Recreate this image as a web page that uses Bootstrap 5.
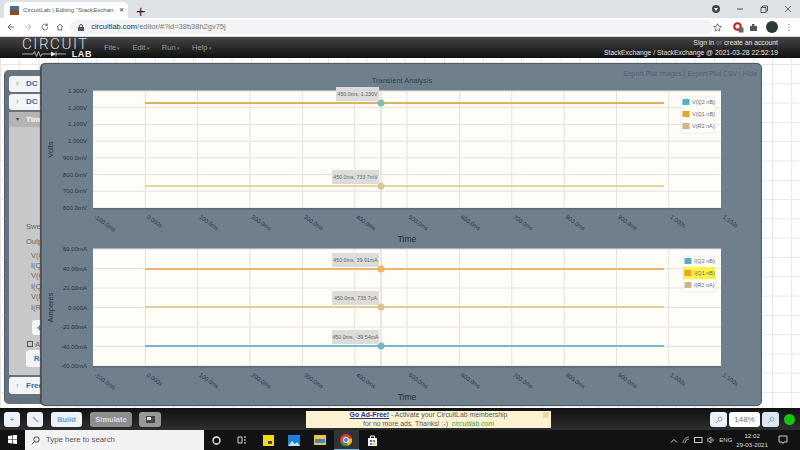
<!DOCTYPE html>
<html lang="en">
<head>
<meta charset="UTF-8">
<title>CircuitLab | Editing "StackExchange"</title>
<link rel="stylesheet" href="https://cdn.jsdelivr.net/npm/bootstrap@5.3.3/dist/css/bootstrap.min.css">
<script src="https://cdn.jsdelivr.net/npm/bootstrap@5.3.3/dist/js/bootstrap.bundle.min.js"></script>
<style>
html, body { width: 800px; height: 450px; margin: 0; overflow: hidden; }
body { font-family: "Liberation Sans", Arial, sans-serif; font-size: 8px; display: flex; flex-direction: column; background: #fff; }
.tabstrip { height: 18px; background: #dee1e6; padding-left: 4px; flex: none; }
.chrome-tab { width: 124px; height: 16px; margin-top: 2px; background: #fff; border-radius: 5px 5px 0 0; color: #555; font-size: 6.1px; padding: 0 4px 0 6px; }
.favicon { width: 9px; height: 9px; background: linear-gradient(#3a6ea5 50%, #8a4a22 50%); flex: none; }
.addrbar { height: 19px; background: #fff; border-bottom: 1px solid #d8d8d8; padding: 0 8px 0 7px; flex: none; color: #666; }
.omnibox { width: 660px; height: 14px; background: #f1f3f4; border-radius: 7px; font-size: 7.5px; color: #777; padding-left: 8px; margin-left: 6px; }
.omnibox b { font-weight: 400; color: #333; }
.lock-gap { margin-right: 3px; }
.appbar { height: 21px; background: linear-gradient(#454545, #101010); color: #e4e4e4; flex: none; padding: 0 22px 0 22px; }
.logo { width: 70px; height: 21px; position: relative; color: #ddd; }
.logo-top { position: absolute; left: 0; top: 1px; font-family: Roboto, "Liberation Sans", sans-serif; font-size: 15px; line-height: 12px; letter-spacing: 1.6px; font-weight: 300; white-space: nowrap; }
.logo-lab { position: absolute; right: 0; top: 13px; font-size: 9px; line-height: 8px; font-weight: 700; letter-spacing: .6px; color: #eee; }
.appmenu { margin-left: 12px; gap: 12px; color: #9a9a9a; font-size: 7.5px; }
.appmenu span::after { content: " \25BE"; font-size: 5px; color: #777; }
.appmeta { text-align: right; font-size: 6.8px; line-height: 9.5px; margin-left: auto; }
.appmeta i { font-style: normal; color: #888; }
.canvas { flex: 1; position: relative; overflow: hidden; background-color: #fff; background-image: linear-gradient(#e7e7e7 1px, transparent 1px), linear-gradient(90deg, #e7e7e7 1px, transparent 1px); background-size: 19.3px 19.3px; background-position: 0 6px; }
.sidepanel { position: absolute; left: 4px; top: 12px; width: 60px; height: 334px; background: #66737f; border-left: 1px solid #4f5c70; border-radius: 5px; padding: 6px 0 0 4px; }
.sidebody { color: #666; font-size: 7.5px; }
.acc-row { height: 16px; background: #f2f4f6; border-radius: 3px; color: #2b6ca8; font-weight: 700; font-size: 8px; padding-left: 17px; line-height: 16px; margin-bottom: 2px; position: relative; }
.acc-row::before { content: "\203A"; position: absolute; left: 7px; color: #88a; font-weight: 400; }
.acc-open { height: 15px; line-height: 15px; color: #fff; background: #b4b4b4; margin: 0; border-radius: 0; }
.acc-open::before { content: "\25BE"; color: #444; font-size: 6px; }
.timesection { background: #c8c8c8; height: 263px; }
.sweep-lines { padding: 92px 0 0 17px; line-height: 15px; }
.trace-lines { padding: 1.500px 0 0 22px; line-height: 10.400px; }
.side-add { margin: 7px 0 0 23px; height: 15px; background: #f6f6f6; border-radius: 3px; color: #5b8fc4; padding-left: 5px; line-height: 15px; }
.side-note { padding-left: 18px; margin-top: 5px; line-height: 10px; }
.side-note span { display: inline-block; width: 6px; height: 6px; border: 1px solid #555; margin-right: 2px; }
.side-run { margin-left: 17px; height: 17px; background: #f2f4f6; border-radius: 3px; color: #2b6ca8; font-weight: 700; padding-left: 8px; line-height: 17px; }
.freq-row { margin-top: 2px; height: 17px; line-height: 17px; }
.plotwin { position: absolute; left: 41px; top: 5px; width: 721px; height: 343px; background: #6f7f8c; border: 1px solid #4f5a66; border-radius: 5px; box-shadow: -1px 0 1px #444; }
.plotlinks { position: absolute; right: 4px; top: 5px; font-size: 6.9px; color: #56626e; }
.plotwin svg { position: absolute; left: 0; top: 0; }
.toolbar { height: 22px; background: linear-gradient(#111, #2e2e2e); flex: none; padding: 4px 0 0 4px; position: relative; }
.toolbtn { height: 15px; background: #eef2f6; border-radius: 3px; font-size: 7.5px; color: #6fa0d0; font-weight: 700; padding: 0; display: flex; align-items: center; justify-content: center; flex: none; }
.toolgrey { background: #8e8e8e; color: #ddd; }
.adbox { position: absolute; left: 306px; top: 3px; width: 245px; height: 17px; background: #fdf3d3; font-size: 6.9px; line-height: 8.500px; color: #555; text-align: center; }
.adbox a { color: #223399; font-weight: 700; }
.adbox em { color: #3fa03f; }
.adclose { position: absolute; right: 2px; top: 1px; width: 6px; height: 6px; background: #e6d9a8; }
.zoomgrp { position: absolute; right: 5px; top: 4px; gap: 2px; }
.zoomdot { width: 11px; height: 11px; border-radius: 50%; background: #16c60c; margin-left: 3px; }
.taskbar { height: 20px; background: #111214; flex: none; color: #ddd; position: relative; }
.searchbox { width: 179px; height: 20px; background: #f2f2f2; margin-left: 25px; color: #555; font-size: 7.8px; padding-left: 6px; gap: 6px; }
.taskicons { gap: 9px; margin-left: 3.500px; }
.taskicon { width: 17px; height: 20px; display: flex; align-items: center; justify-content: center; }
.taskactive { background: #333; border-bottom: 1px solid #76b9ed; }
.traybox { position: absolute; right: 12px; top: 0; height: 20px; gap: 4px; font-size: 6px; }
.clock { text-align: center; line-height: 9px; font-size: 6.2px; margin-right: 6px; }
</style>
</head>
<body>

<div class="tabstrip d-flex align-items-start">
  <div class="chrome-tab d-flex align-items-center gap-1">
    <span class="favicon"></span>
    <span class="flex-grow-1 text-nowrap">CircuitLab | Editing "StackExchan</span>
    <span class="text-dark">&#10005;</span>
  </div>
  <span class="ms-2 mt-1 text-dark fs-6 lh-1">+</span>
  <div class="ms-auto d-flex align-items-center gap-3 pe-2" style="height:18px">
    <svg width="8" height="8" viewBox="0 0 8 8"><circle cx="4" cy="4" r="4" fill="#444"/><path d="M2 3h4L4 6z" fill="#fff"/></svg>
    <svg width="8" height="8" viewBox="0 0 8 8"><path d="M1 4h6" stroke="#555"/></svg>
    <svg width="8" height="8" viewBox="0 0 8 8"><path d="M1 2.500h5v5H1zM2.500 2.500V1H7.500V6H6" fill="none" stroke="#555"/></svg>
    <svg width="8" height="8" viewBox="0 0 8 8"><path d="M1 1l6 6M7 1L1 7" stroke="#666"/></svg>
  </div>
</div>

<div class="addrbar d-flex align-items-center" style="padding-left:7px">
  <svg width="8" height="8" viewBox="0 0 8 8" style="margin-right:9px"><path d="M7 4H1M4 1L1 4l3 3" fill="none" stroke="#666"/></svg>
  <svg width="8" height="8" viewBox="0 0 8 8" style="margin-right:9px"><path d="M1 4h6M4 1l3 3-3 3" fill="none" stroke="#bbb"/></svg>
  <svg width="8" height="8" viewBox="0 0 8 8" style="margin-right:8px"><path d="M7 4A3 3 0 1 1 6 1.800M6.500 .5v2h-2" fill="none" stroke="#666"/></svg>
  <svg width="8" height="8" viewBox="0 0 8 8"><path d="M1 4l3-3 3 3M2 3.500V7h4V3.500" fill="none" stroke="#666"/></svg>
  <div class="omnibox d-flex align-items-center gap-1">
    <svg class="lock-gap" width="6" height="7" viewBox="0 0 6 7"><rect y="3" width="6" height="4" fill="#555"/><path d="M1.500 3V2a1.500 1.500 0 0 1 3 0v1" fill="none" stroke="#555"/></svg>
    <span><b>circuitlab.com</b>/editor/#?id=38b38h2gv75j</span>
  </div>
  <div class="ms-auto d-flex align-items-center gap-2">
    <svg width="9" height="9" viewBox="0 0 10 10" style="margin-right:3px"><path d="M5 .8l1.300 2.800 3 .3-2.300 2 .7 3L5 7.400 2.300 8.900l.7-3-2.300-2 3-.3z" fill="none" stroke="#666"/></svg>
    <svg width="11" height="11" viewBox="0 0 11 11" style="margin-right:-3px"><circle cx="4.500" cy="4.500" r="3.300" fill="none" stroke="#cc1111" stroke-width="2"/><rect x="5.500" y="5.500" width="5" height="5" fill="#666"/></svg>
    <svg width="9" height="9" viewBox="0 0 9 9"><path d="M1 3h2V1h2.500v2H8v5H1z" fill="#555"/></svg>
    <svg width="12" height="12" viewBox="0 0 12 12"><circle cx="6" cy="6" r="6" fill="#2f3a3a"/></svg>
    <svg width="6" height="9" viewBox="0 0 6 9"><path d="M3 1v.8M3 4v.8M3 7v.8" stroke="#555" stroke-width="1.200"/></svg>
  </div>
</div>

<div class="appbar d-flex align-items-center">
  <div class="logo">
    <span class="logo-top">CIRCUIT</span>
    <svg width="46" height="6" viewBox="0 0 46 6" style="position:absolute;left:0;top:13.500px"><path d="M0 3h11l1.500-2.500 2 5 2-5 2 5 1.500-2.500H29M34 .5v5M34 3h10" fill="none" stroke="#eee" stroke-width=".7"/><path d="M29 .5v5l5-2.500z" fill="#eee"/></svg>
    <span class="logo-lab">LAB</span>
  </div>
  <div class="appmenu d-flex">
    <span>File</span><span>Edit</span><span>Run</span><span>Help</span>
  </div>
  <div class="appmeta">
    <div>Sign in <i>or</i> create an account</div>
    <div>StackExchange / StackExchange @ 2021-03-28 22:52:19</div>
  </div>
</div>

<div class="canvas">
  <div class="sidepanel">
    <div class="sidebody">
      <div class="acc-row">DC</div>
      <div class="acc-row">DC S</div>
      <div class="timesection">
        <div class="acc-row acc-open">Tim</div>
        <div class="sweep-lines">Swee<br>Outp</div>
        <div class="trace-lines">V(Q<br>I(Q<br>V(Q<br>I(Q<br>V(R<br>I(R</div>
        <div class="side-add">&#9670;</div>
        <div class="side-note"><span></span>A</div>
        <div class="side-run">Re</div>
      </div>
      <div class="acc-row freq-row">Freq</div>
    </div>
  </div>
  <div class="plotwin">
    <svg id="plots" width="721" height="343" xmlns="http://www.w3.org/2000/svg"></svg>
    <div class="plotlinks">Export Plot Images | Export Plot CSV | Hide</div>
  </div>
</div>

<div class="toolbar d-flex gap-1">
  <div class="toolbtn" style="width:16px;margin-right:3px">+</div>
  <div class="toolbtn" style="width:16px;margin-right:4px"><svg width="7" height="7" viewBox="0 0 7 7"><path d="M1 1l5 5" stroke="#8ab" stroke-width="1.400"/></svg></div>
  <div class="toolbtn" style="width:31px;margin-right:4px">Build</div>
  <div class="toolbtn toolgrey" style="width:42px;margin-right:3px">Simulate</div>
  <div class="toolbtn toolgrey" style="width:22px;background:#999">
    <svg width="9" height="7" viewBox="0 0 9 7"><rect width="9" height="7" fill="#444"/><rect x="1" y="1" width="4" height="3" fill="#ddd"/></svg>
  </div>
  <div class="adbox">
    <span class="adclose"></span>
    <a href="#">Go Ad-Free!</a> - Activate your CircuitLab membership<br>
    for no more ads. Thanks! :-) &nbsp;<em>circuitlab.com</em>
  </div>
  <div class="zoomgrp d-flex align-items-center">
    <div class="toolbtn" style="width:17px"><svg width="8" height="8" viewBox="0 0 8 8"><circle cx="5" cy="3" r="2" fill="none" stroke="#8ab"/><path d="M3.500 4.500L1 7" stroke="#8ab"/></svg></div>
    <div class="toolbtn" style="width:31px;background:#fff;color:#777;font-weight:400;font-size:8px">148%</div>
    <div class="toolbtn" style="width:17px;background:#dfe8f2"><svg width="8" height="8" viewBox="0 0 8 8"><circle cx="5" cy="3" r="2" fill="none" stroke="#8ab"/><path d="M3.500 4.500L1 7" stroke="#8ab"/></svg></div>
    <div class="zoomdot"></div>
  </div>
</div>

<div class="taskbar d-flex align-items-center">
  <svg width="9" height="9" viewBox="0 0 9 9" style="position:absolute;left:8px;top:5px"><path d="M0 1l4-.6V4H0zM4.600 .3L9 0v4H4.600zM0 4.600h4v3.900L0 8zM4.600 4.600H9V9l-4.400-.6z" fill="#fff"/></svg>
  <div class="searchbox d-flex align-items-center">
    <svg width="9" height="9" viewBox="0 0 9 9"><circle cx="5.500" cy="3.500" r="2.700" fill="none" stroke="#444"/><path d="M3.500 5.500L.8 8.300" stroke="#444"/></svg>
    <span>Type here to search</span>
  </div>
  <div class="taskicons d-flex align-items-center">
    <div class="taskicon"><svg width="9" height="9" viewBox="0 0 9 9"><circle cx="4.500" cy="4.500" r="3.500" fill="none" stroke="#fff" stroke-width="1.300"/></svg></div>
    <div class="taskicon"><svg width="10" height="8" viewBox="0 0 10 8"><path d="M1 1h4v6H1zM7 1h2M7 4h2M7 7h2" fill="none" stroke="#ddd"/></svg></div>
    <div class="taskicon"><svg width="11" height="11" viewBox="0 0 11 11"><rect width="11" height="11" fill="#f5d90a"/><rect x="5" y="6" width="4" height="3" fill="#444"/></svg></div>
    <div class="taskicon"><svg width="12" height="11" viewBox="0 0 12 11"><rect width="12" height="11" fill="#1f7fd6"/><path d="M0 11l4-5 3 3 2-2 3 4z" fill="#bfe3fb"/></svg></div>
    <div class="taskicon"><svg width="12" height="10" viewBox="0 0 12 10"><rect width="12" height="10" fill="#f0c24b"/><rect x="1" y="4" width="10" height="4" fill="#3f88c5"/></svg></div>
    <div class="taskicon taskactive" style="width:25px;margin:0 -4px"><svg width="12" height="12" viewBox="0 0 12 12"><circle cx="6" cy="6" r="6" fill="#d8442f"/><path d="M6 6L.8 9A6 6 0 0 0 8 11.700z" fill="#2f9e48"/><path d="M6 6l2 5.700A6 6 0 0 0 11.800 4.500z" fill="#f4c20d"/><circle cx="6" cy="6" r="2.600" fill="#4286f5" stroke="#fff"/></svg></div>
    <div class="taskicon"><svg width="11" height="11" viewBox="0 0 11 11"><path d="M1 3h9v8H1z" fill="#fff"/><path d="M3.500 3V1h4v2" fill="none" stroke="#fff"/><rect x="3" y="5" width="2" height="2" fill="#e25"/><rect x="6" y="5" width="2" height="2" fill="#3a3"/><rect x="3" y="8" width="2" height="2" fill="#39e"/><rect x="6" y="8" width="2" height="2" fill="#ec2"/></svg></div>
  </div>
  <div class="traybox d-flex align-items-center">
    <svg width="8" height="5" viewBox="0 0 8 5"><path d="M1 4.500l3-3 3 3" fill="none" stroke="#ccc"/></svg>
    <svg width="8" height="8" viewBox="0 0 8 8"><path d="M1 7A6 6 0 0 1 7 1M3 7a4 4 0 0 1 4-4" fill="none" stroke="#999"/></svg>
    <svg width="9" height="6" viewBox="0 0 9 6"><rect x=".5" y=".5" width="7.500" height="5" fill="none" stroke="#ccc"/></svg>
    <svg width="8" height="8" viewBox="0 0 8 8"><path d="M0 3h2l2-2v6L2 5H0zM5.500 2.500a2 2 0 0 1 0 3" fill="none" stroke="#bbb"/></svg>
    <span>ENG</span>
    <div class="clock">12:02<br>29-03-2021</div>
    <svg width="10" height="10" viewBox="0 0 10 10"><path d="M1 1h8v6H6L5 8.500 4 7H1z" fill="none" stroke="#ccc"/></svg>
  </div>
</div>

<script>
// both transient plots, coordinates are screen pixels minus the window offset
const svg = document.getElementById('plots');
const offX = 42, offY = 64;
const xLabels = ['-100.0ms','0.000s','100.0ms','200.0ms','300.0ms','400.0ms','500.0ms','600.0ms','700.0ms','800.0ms','900.0ms','1.000s','1.100s'];
let out = '';

const text = (x, y, s, size, fill, extra) =>
  `<text x="${x}" y="${y}" font-size="${size}" fill="${fill}" font-family="Liberation Sans, Arial, sans-serif" ${extra || ''}>${s}</text>`;

function plot(cfg) {
  const x0 = 93 - offX, x1 = 721 - offX, y0 = cfg.top - offY, y1 = cfg.bottom - offY;
  const stepX = 52.35, stepY = (y1 - y0) / (cfg.ticks.length - 1);
  out += `<rect x="${x0}" y="${y0}" width="${x1 - x0}" height="${y1 - y0}" fill="#fffdf7"/>`;
  cfg.ticks.forEach((t, i) => {
    const y = y0 + i * stepY;
    out += `<line x1="${x0}" x2="${x1}" y1="${y}" y2="${y}" stroke="#e6e2da"/>`;
    out += text(x0 - 6, y + 2, t, 6, '#2c3640', 'text-anchor="end"');
  });
  xLabels.forEach((t, i) => {
    const x = x0 + i * stepX;
    if (i > 0 && i < 12) out += `<line x1="${x}" x2="${x}" y1="${y0}" y2="${y1}" stroke="#e6e2da"/>`;
    out += text(x + 1, y1 + 10, t, 5.800, '#2c3640', `transform="rotate(35 ${x + 1} ${y1 + 10})"`);
  });
  out += `<rect x="${x0}" y="${y1}" width="${x1 - x0}" height="1.500" fill="#5c6a76"/>`;
  // axis titles
  const my = (y0 + y1) / 2;
  out += text(11, my, cfg.unit, 7.500, '#28323c', `text-anchor="middle" transform="rotate(-90 11 ${my})"`);
  out += text(365, y1 + 34, 'Time', 8.500, '#222c36', 'text-anchor="middle"');
  // traces, markers and value labels
  const cx = 381 - offX;
  cfg.traces.forEach(tr => {
    const y = tr.y - offY;
    out += `<line x1="${145 - offX}" x2="${664 - offX}" y1="${y}" y2="${y}" stroke="${tr.color}" stroke-width="${tr.w}"/>`;
  });
  out += `<line x1="${cx}" x2="${cx}" y1="${y0}" y2="${y1}" stroke="#d5d2ca"/>`;
  cfg.traces.forEach(tr => {
    const y = tr.y - offY;
    const bx = (tr.boxX || 332) - offX, bw = 379 - (tr.boxX || 332);
    out += `<circle cx="${cx}" cy="${y}" r="3.500" fill="${tr.dot}"/>`;
    out += `<rect x="${bx}" y="${y - 16}" width="${bw}" height="14" fill="#dcdcda"/>`;
    out += text(bx + bw / 2, y - 7, tr.label, 5.300, '#666', 'text-anchor="middle"');
  });
  // legend
  const lx = cfg.legendX - offX, ly = cfg.legendY - offY;
  out += `<rect x="${lx}" y="${ly}" width="${cfg.legendW}" height="36" fill="#fffdf7" stroke="#eee"/>`;
  cfg.legend.forEach((l, i) => {
    const y = ly + 2 + i * 12;
    if (l.hi) out += `<rect x="${lx}" y="${y - 3}" width="${cfg.legendW}" height="12" fill="#fdf23c"/>`;
    out += `<rect x="${lx + 1.500}" y="${y}" width="7" height="6" fill="${l.color}"/>`;
    out += text(lx + 11, y + 5, l.name, 5.500, '#667', '');
  });
}

out += text(402 - offX, 83 - offY, 'Transient Analysis', 7.500, '#36414c', 'text-anchor="middle"');

plot({
  top: 91, bottom: 208, unit: 'Volts',
  ticks: ['1.300V','1.200V','1.100V','1.000V','900.0mV','800.0mV','700.0mV','600.0mV'],
  traces: [
    {y: 103, color: '#dfb05f', w: 2, dot: '#7cc0b0', label: '450.0ms, 1.230V', boxX: 336},
    {y: 186, color: '#dcc486', w: 1.500, dot: '#dcc88e', label: '450.0ms, 733.7mV'}
  ],
  legendX: 681, legendY: 97, legendW: 34,
  legend: [{name: 'V(Q2 nB)', color: '#4fb0c6'}, {name: 'V(Q1 nB)', color: '#e8a52e'}, {name: 'V(R2 nA)', color: '#c9b98a'}]
});

plot({
  top: 249, bottom: 366, unit: 'Amperes',
  ticks: ['60.00mA','40.00mA','20.00mA','0.000A','-20.00mA','-40.00mA','-60.00mA'],
  traces: [
    {y: 269, color: '#efb26a', w: 2, dot: '#efb560', label: '450.0ms, 39.91mA'},
    {y: 307, color: '#dcd09a', w: 2, dot: '#dcc48e', label: '450.0ms, 733.7&#956;A'},
    {y: 346, color: '#72b8c8', w: 2, dot: '#72b8c8', label: '450.0ms, -39.54mA'}
  ],
  legendX: 683, legendY: 256, legendW: 32,
  legend: [{name: 'I(Q2 nB)', color: '#4fb0c6'}, {name: 'I(Q1 nB)', color: '#e8a52e', hi: true}, {name: 'I(R2 nA)', color: '#c9b98a'}]
});

svg.innerHTML = out;
</script>
</body>
</html>
